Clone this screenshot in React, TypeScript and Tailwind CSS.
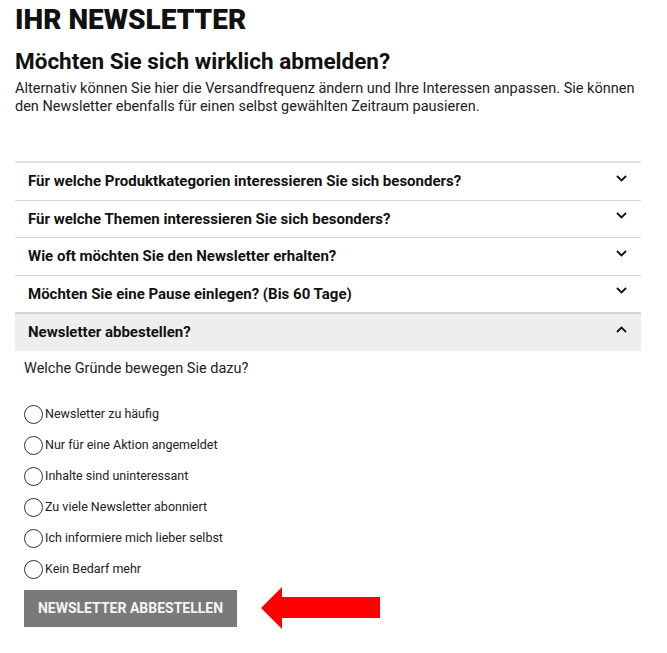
import React from 'react';

const sections = [
  'Für welche Produktkategorien interessieren Sie sich besonders?',
  'Für welche Themen interessieren Sie sich besonders?',
  'Wie oft möchten Sie den Newsletter erhalten?',
  'Möchten Sie eine Pause einlegen? (Bis 60 Tage)',
];

const reasons = [
  'Newsletter zu häufig',
  'Nur für eine Aktion angemeldet',
  'Inhalte sind uninteressant',
  'Zu viele Newsletter abonniert',
  'Ich informiere mich lieber selbst',
  'Kein Bedarf mehr',
];

const Chevron = ({ up }: { up?: boolean }) => (
  <svg width="11" height="7" viewBox="0 0 11 7" className="mr-[14px] mb-[6px]">
    <path
      d={up ? 'M1 6 L5.5 1.5 L10 6' : 'M1 1 L5.5 5.5 L10 1'}
      fill="none"
      stroke="#111"
      strokeWidth="1.8"
    />
  </svg>
);

const App = () => {
  return (
    <div className="bg-white w-[667px] h-[653px] px-[15px] pt-[4px] text-[#111] font-['Roboto',sans-serif]">
      <h1 className="text-[28px] leading-[32px] font-black">IHR NEWSLETTER</h1>
      <h2 className="mt-[11px] text-[22.5px] leading-[28px] font-bold">Möchten Sie sich wirklich abmelden?</h2>
      <p className="mt-[5px] text-[14.5px] leading-[18px] text-[#222]">
        Alternativ können Sie hier die Versandfrequenz ändern und Ihre Interessen anpassen. Sie können
        den Newsletter ebenfalls für einen selbst gewählten Zeitraum pausieren.
      </p>

      <div className="mt-[45px] w-[626px] border-t-2 border-[#e2e2e2]">
        {sections.map((s) => (
          <div
            key={s}
            className="h-[37.5px] flex items-center justify-between pl-[13px] border-b border-[#d6d6d6]"
          >
            <span className="text-[15px] font-bold">{s}</span>
            <Chevron />
          </div>
        ))}
        <div className="h-[38px] flex items-center justify-between pl-[13px] bg-[#eeeeee] border-t border-[#d0d0d0]">
          <span className="text-[15px] font-bold">Newsletter abbestellen?</span>
          <Chevron up />
        </div>

        <div className="pl-[9px] pt-[9px]">
          <p className="text-[14.5px] leading-[18px] text-[#222]">Welche Gründe bewegen Sie dazu?</p>
          <div className="mt-[27px] flex flex-col gap-[13px]">
            {reasons.map((r) => (
              <label key={r} className="flex items-center h-[18px]">
                <span className="w-[19px] h-[19px] rounded-full border border-[#333] bg-white" />
                <span className="ml-[2px] text-[12.5px] text-[#222]">{r}</span>
              </label>
            ))}
          </div>

          <div className="mt-[8px] flex items-center">
            <button className="w-[213px] h-[37px] bg-[#7a7a7a] text-[#f4f4f4] text-[14px] font-bold uppercase">
              Newsletter abbestellen
            </button>
            <svg width="120" height="44" viewBox="0 0 120 44" className="ml-[24px]">
              <polygon points="0,22 21,1 21,11 119,11 119,32 21,32 21,43" fill="#ff0000" />
            </svg>
          </div>
        </div>
      </div>
    </div>
  );
};

export default App;
